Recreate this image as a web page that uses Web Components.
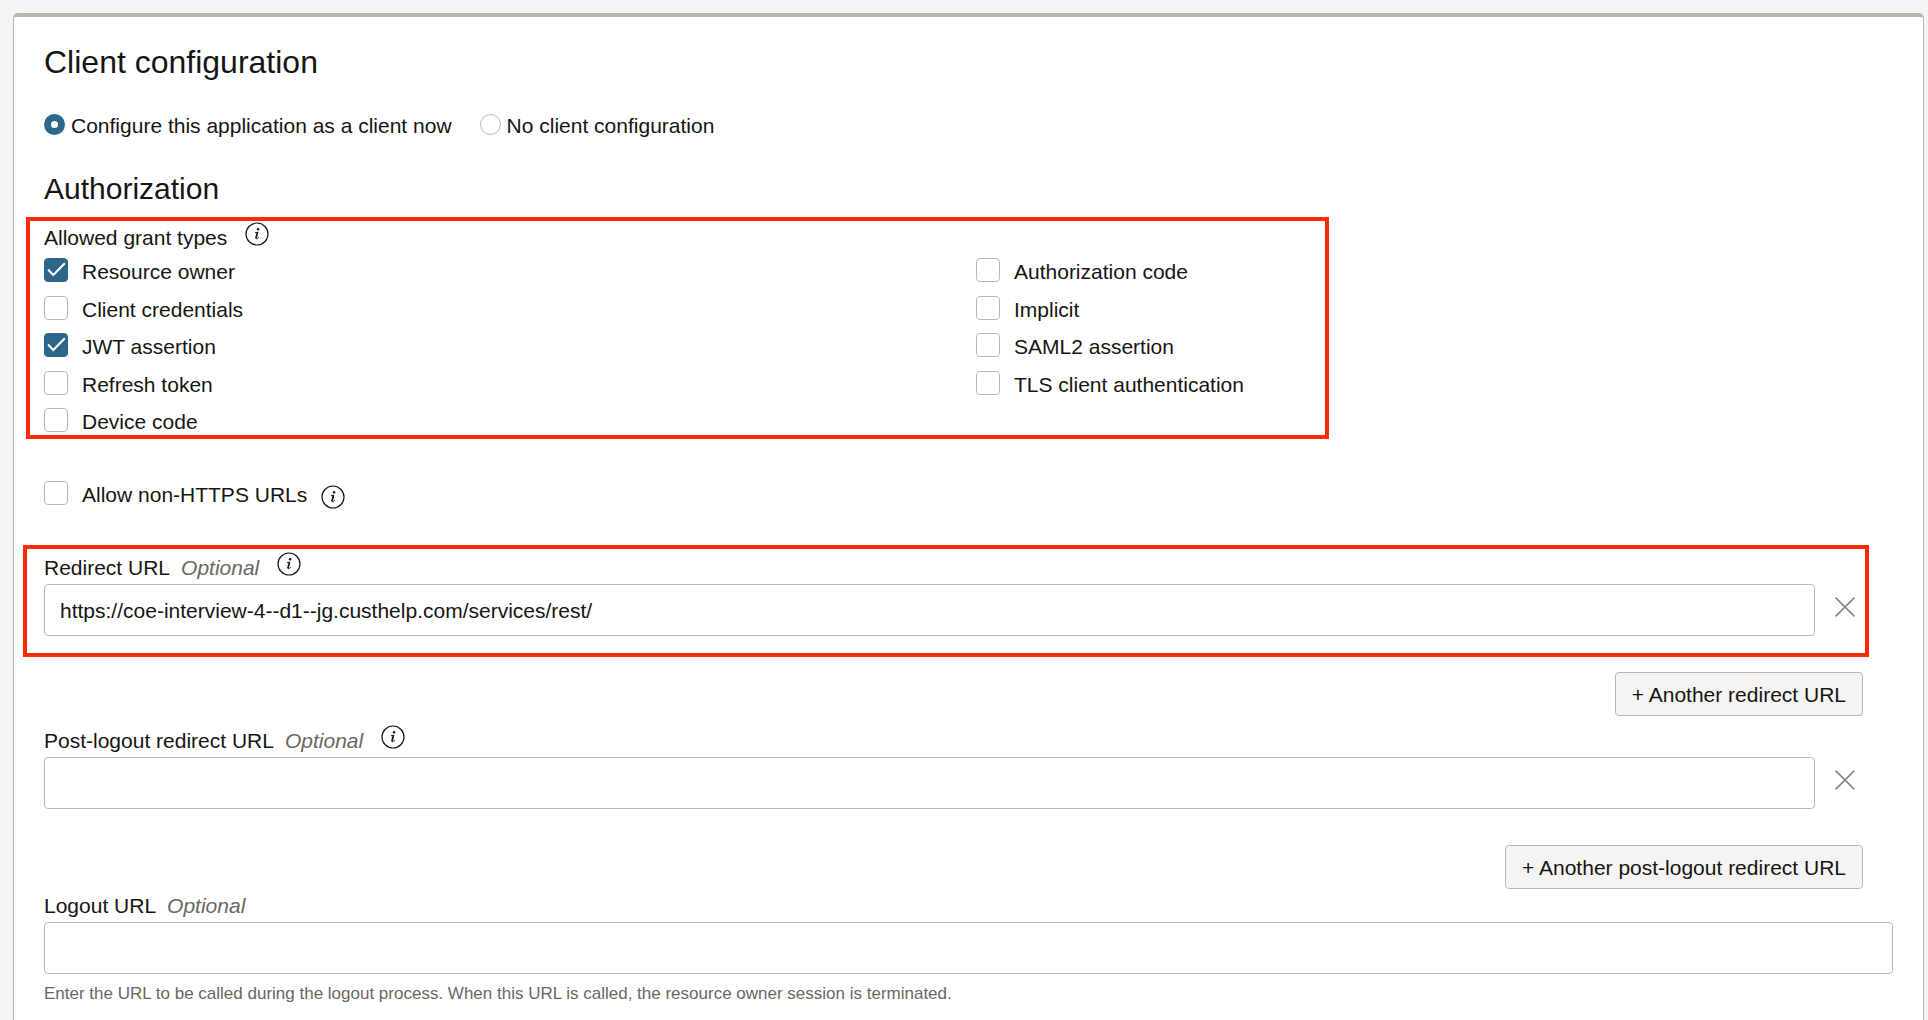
<!DOCTYPE html>
<html lang="en">
<head>
<meta charset="utf-8">
<meta name="viewport" content="width=device-width, initial-scale=1">
<title>Client configuration</title>
<style>
  :root {
    --surface: #ffffff;
    --page: #f5f4f2;
    --text: #161513;
    --muted: #6b6661;
    --line: #bcb6b1;
    --accent: #2c6689;
    --mark: #ff2b06;
  }

  body {
    margin: 0;
    min-height: 100vh;
    box-sizing: border-box;
    padding: 13px 4px 0 13px;
    display: flex;
    flex-direction: column;
    background: var(--page);
    color: var(--text);
    font: 21px/24px "Helvetica Neue", "Liberation Sans", Arial, sans-serif;
  }

  config-panel {
    flex: 1;
  }
</style>
</head>
<body>
<config-panel heading="Client configuration">
  <radio-choice name="client" options="Configure this application as a client now|No client configuration" selected="0"></radio-choice>

  <form-section heading="Authorization">
    <marked-area kind="grants">
      <grant-types
        label="Allowed grant types"
        options="Resource owner|Authorization code|Client credentials|Implicit|JWT assertion|SAML2 assertion|Refresh token|TLS client authentication|Device code"
        checked="Resource owner|JWT assertion"></grant-types>
    </marked-area>
    <check-option class="https" label="Allow non-HTTPS URLs">
      <info-button label="About non-HTTPS URLs"></info-button>
    </check-option>
    <marked-area kind="redirect">
      <url-field label="Redirect URL" value="https://coe-interview-4--d1--jg.custhelp.com/services/rest/" info removable></url-field>
    </marked-area>
    <add-button>+ Another redirect URL</add-button>
    <url-field class="post" label="Post-logout redirect URL" info removable></url-field>
    <add-button>+ Another post-logout redirect URL</add-button>
    <url-field class="logout" label="Logout URL" help="Enter the URL to be called during the logout process. When this URL is called, the resource owner session is terminated."></url-field>
  </form-section>
</config-panel>

<script>
/* ========== <config-panel>: card that holds the form ========== */
class ConfigPanel extends HTMLElement {
  constructor() {
    super();
    this.attachShadow({ mode: 'open' });
  }

  connectedCallback() {
    this.shadowRoot.innerHTML = `
      <style>
        :host {
          display: block;
          box-sizing: border-box;
          padding: 25px 30px 14px;
          background: var(--surface);
          border: 1px solid var(--line);
          border-top-width: 4px;
          border-bottom: 0;
          border-radius: 5px 5px 0 0;
        }

        h1 {
          margin: 0 0 32px;
          font-size: 32px;
          line-height: 40px;
          font-weight: 400;
        }
      </style>
      <h1>${this.getAttribute('heading')}</h1>
      <slot></slot>
    `;
  }
}

/* ========== <radio-choice>: radios on one line ========== */
class RadioChoice extends HTMLElement {
  constructor() {
    super();
    this.attachShadow({ mode: 'open' });
  }

  connectedCallback() {
    const name = this.getAttribute('name');
    const selected = Number(this.getAttribute('selected'));
    const options = this.getAttribute('options').split('|');

    this.shadowRoot.innerHTML = `
      <style>
        :host {
          display: flex;
          flex-wrap: wrap;
          gap: 12px 28px;
        }

        label {
          display: flex;
          align-items: flex-start;
          gap: 6px;
        }

        input {
          appearance: none;
          box-sizing: border-box;
          flex: none;
          width: 21px;
          height: 21px;
          margin: 0;
          border: 1px solid var(--line);
          border-radius: 50%;
          background: var(--surface);
        }

        input:checked {
          border: 7px solid var(--accent);
        }
      </style>
      ${options.map((text, i) => `
        <label><input type="radio" name="${name}" ${i === selected ? 'checked' : ''}>${text}</label>
      `).join('')}
    `;
  }
}

/* ========== <form-section> ========== */
class FormSection extends HTMLElement {
  constructor() {
    super();
    this.attachShadow({ mode: 'open' });
  }

  connectedCallback() {
    this.shadowRoot.innerHTML = `
      <style>
        :host {
          display: block;
          margin-top: 33px;
        }

        h2 {
          margin: 0 0 18px;
          font-size: 30px;
          line-height: 36px;
          font-weight: 400;
        }

        ::slotted(.https) {
          margin: 49px 0 50px;
        }

        ::slotted(add-button) {
          margin-top: 36px;
        }

        ::slotted(.post) {
          margin-top: 12px;
        }

        ::slotted(.logout) {
          margin-top: 4px;
        }
      </style>
      <h2>${this.getAttribute('heading')}</h2>
      <slot></slot>
    `;
  }
}

/* ========== <marked-area>: red frame laid over its content ========== */
class MarkedArea extends HTMLElement {
  constructor() {
    super();
    this.attachShadow({ mode: 'open' });
  }

  connectedCallback() {
    this.shadowRoot.innerHTML = `
      <style>
        :host {
          display: block;
          position: relative;
        }

        .frame {
          position: absolute;
          border: 4px solid var(--mark);
          pointer-events: none;
        }

        :host([kind="grants"]) .frame {
          inset: -8px 564px -7px -18px;
        }

        :host([kind="redirect"]) .frame {
          inset: -10px 24px -21px -21px;
        }
      </style>
      <slot></slot>
      <div class="frame"></div>
    `;
  }
}

/* ========== <info-button> ========== */
class InfoButton extends HTMLElement {
  constructor() {
    super();
    this.attachShadow({ mode: 'open' });
  }

  connectedCallback() {
    this.shadowRoot.innerHTML = `
      <style>
        :host {
          display: block;
          flex: none;
          height: 24px;
        }

        button {
          display: block;
          padding: 0;
          border: 0;
          background: none;
          color: inherit;
        }

        svg {
          display: block;
        }
      </style>
      <button type="button" aria-label="${this.getAttribute('label')}">
        <svg width="24" height="24" viewBox="0 0 24 24" fill="none" stroke="currentColor" aria-hidden="true">
          <circle cx="12" cy="12" r="11" stroke-width="1.2"/>
          <circle cx="13.1" cy="7.2" r="1.2" fill="currentColor" stroke="none"/>
          <path d="M10 10.8l2.8-.7-1.6 6.1c-.2.8.7.9 2.6-1" stroke-width="1"/>
          <path d="M12.4 10.4l-1.6 6" stroke-width="1.6"/>
        </svg>
      </button>
    `;
  }
}

/* ========== <check-option> ========== */
class CheckOption extends HTMLElement {
  constructor() {
    super();
    this.attachShadow({ mode: 'open' });
  }

  connectedCallback() {
    this.shadowRoot.innerHTML = `
      <style>
        :host {
          display: flex;
          align-items: flex-start;
          gap: 14px;
        }

        label {
          display: flex;
          gap: 14px;
        }

        .text {
          padding-top: 2px;
          margin-bottom: -2px;
        }

        .box {
          display: grid;
          flex: none;
          width: 24px;
          height: 24px;
        }

        input,
        svg {
          grid-area: 1 / 1;
        }

        input {
          appearance: none;
          box-sizing: border-box;
          width: 24px;
          height: 24px;
          margin: 0;
          border: 1px solid var(--line);
          border-radius: 4px;
          background: var(--surface);
        }

        input:checked {
          border-color: var(--accent);
          background: var(--accent);
        }

        svg {
          z-index: 1;
          visibility: hidden;
          pointer-events: none;
        }

        input:checked + svg {
          visibility: visible;
        }

        ::slotted(info-button) {
          margin-top: 4px;
          margin-bottom: -4px;
        }
      </style>
      <label>
        <span class="box">
          <input type="checkbox" ${this.hasAttribute('checked') ? 'checked' : ''}>
          <svg width="24" height="24" viewBox="0 0 24 24" fill="none" stroke="#fff" stroke-width="2" aria-hidden="true">
            <path d="M4 11.5l5.3 5.5L20.8 5.2"/>
          </svg>
        </span>
        <span class="text">${this.getAttribute('label')}</span>
      </label>
      <slot></slot>
    `;
  }
}

/* ========== <grant-types>: two columns of checkboxes ========== */
class GrantTypes extends HTMLElement {
  constructor() {
    super();
    this.attachShadow({ mode: 'open' });
  }

  connectedCallback() {
    const label = this.getAttribute('label');
    const checked = this.getAttribute('checked').split('|');
    const options = this.getAttribute('options').split('|');

    this.shadowRoot.innerHTML = `
      <style>
        :host {
          display: block;
        }

        .head {
          display: flex;
          align-items: flex-start;
          gap: 18px;
          height: 24px;
          margin-bottom: 9px;
          line-height: 26px;
        }

        info-button {
          margin-top: -3px;
        }

        .options {
          display: grid;
          grid-template-columns: 1fr 1fr;
          column-gap: 15px;
          min-height: 174px;
          align-content: space-between;
        }
      </style>
      <div class="head">
        <span id="legend">${label}</span>
        <info-button label="About ${label.toLowerCase()}"></info-button>
      </div>
      <div class="options" role="group" aria-labelledby="legend">
        ${options.map(text => `
          <check-option label="${text}" ${checked.includes(text) ? 'checked' : ''}></check-option>
        `).join('')}
      </div>
    `;
  }
}

/* ========== <url-field>: label, text box, optional remove button ========== */
class UrlField extends HTMLElement {
  constructor() {
    super();
    this.attachShadow({ mode: 'open' });
  }

  connectedCallback() {
    const label = this.getAttribute('label');
    const value = this.getAttribute('value') || '';
    const help = this.getAttribute('help');

    this.shadowRoot.innerHTML = `
      <style>
        :host {
          display: block;
        }

        .head {
          display: flex;
          align-items: flex-start;
          gap: 18px;
          height: 24px;
          margin-bottom: 5px;
          line-height: 26px;
        }

        label {
          display: flex;
          gap: 11px;
        }

        em {
          color: var(--muted);
        }

        info-button {
          margin-top: -3px;
        }

        .row {
          display: flex;
          align-items: flex-start;
          gap: 12px;
        }

        :host([removable]) .row {
          margin-right: 30px;
        }

        input {
          box-sizing: border-box;
          flex: 1;
          min-width: 0;
          height: 52px;
          margin: 0;
          padding: 1px 15px 0;
          border: 1px solid var(--line);
          border-radius: 4px;
          background: var(--surface);
          color: inherit;
          font: inherit;
        }

        .remove {
          display: grid;
          place-items: center;
          width: 36px;
          height: 46px;
          padding: 0;
          border: 0;
          background: none;
          color: #85827f;
        }

        p {
          margin: 10px 0 0;
          color: var(--muted);
          font-size: 17px;
          line-height: 20px;
        }
      </style>
      <div class="head">
        <label for="url"><span>${label}</span><em>Optional</em></label>
        ${this.hasAttribute('info') ? `<info-button label="About ${label}"></info-button>` : ''}
      </div>
      <div class="row">
        <input id="url" type="text" value="${value}" ${help ? 'aria-describedby="help"' : ''}>
        ${this.hasAttribute('removable') ? `
          <button class="remove" type="button" aria-label="Remove ${label}">
            <svg width="20" height="20" viewBox="0 0 20 20" fill="none" stroke="currentColor" stroke-width="1.5" aria-hidden="true">
              <path d="M.6.6l18.8 18.8M19.4.6L.6 19.4"/>
            </svg>
          </button>
        ` : ''}
      </div>
      ${help ? `<p id="help">${help}</p>` : ''}
    `;
  }
}

/* ========== <add-button> ========== */
class AddButton extends HTMLElement {
  constructor() {
    super();
    this.attachShadow({ mode: 'open' });
  }

  connectedCallback() {
    this.shadowRoot.innerHTML = `
      <style>
        :host {
          display: flex;
          justify-content: flex-end;
          padding-right: 30px;
        }

        button {
          height: 44px;
          padding: 2px 16px 0;
          border: 1px solid var(--line);
          border-radius: 4px;
          background: var(--page);
          color: inherit;
          font: inherit;
        }
      </style>
      <button type="button"><slot></slot></button>
    `;
  }
}

// Register the custom elements
customElements.define('info-button', InfoButton);
customElements.define('check-option', CheckOption);
customElements.define('config-panel', ConfigPanel);
customElements.define('radio-choice', RadioChoice);
customElements.define('form-section', FormSection);
customElements.define('marked-area', MarkedArea);
customElements.define('grant-types', GrantTypes);
customElements.define('url-field', UrlField);
customElements.define('add-button', AddButton);
</script>
</body>
</html>
